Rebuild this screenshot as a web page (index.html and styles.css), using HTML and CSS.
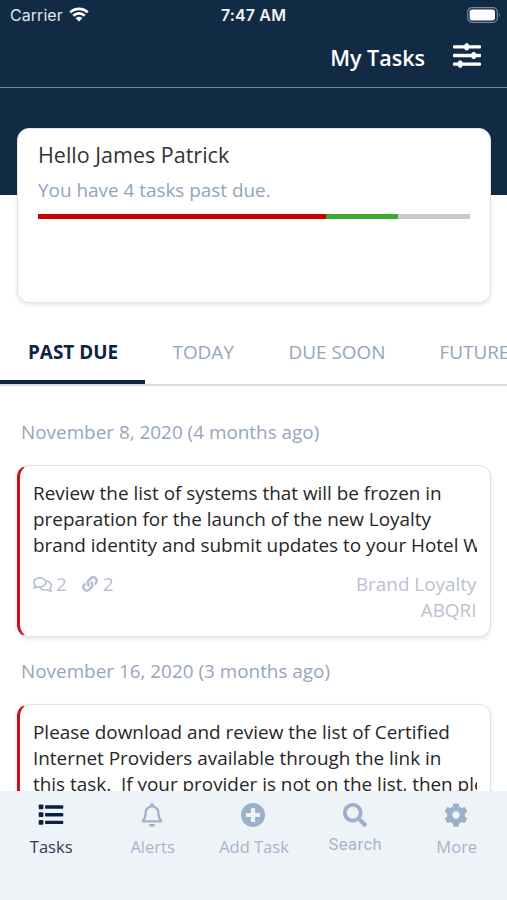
FILE: index.html
```html
<!DOCTYPE html>
<html lang="en">
<head>
<meta charset="utf-8">
<title>My Tasks</title>
<link rel="stylesheet" href="styles.css">
</head>
<body>
<div class="app">
  <header class="hero">
    <div class="status">
      <div class="carrier"><span>Carrier</span>
        <svg class="wifi" viewBox="0 0 20 15"><path d="M10 14.600 6.600 11.200a4.800 4.800 0 0 1 6.800 0z" fill="#fff"/><path d="M4.300 8.700a8.200 8.200 0 0 1 11.400 0M1.200 5.400a12.600 12.600 0 0 1 17.600 0" fill="none" stroke="#fff" stroke-width="2.700"/></svg>
      </div>
      <div class="time">7:47 AM</div>
      <svg class="battery" viewBox="0 0 34 16"><rect x=".7" y=".7" width="29.600" height="14.600" rx="4.400" fill="none" stroke="#7a8796" stroke-width="1.200"/><rect x="2.600" y="2.600" width="25.400" height="10.800" rx="2.600" fill="#fff"/><path d="M31.800 5.500q1.800 2.500 0 5z" fill="#7a8796"/></svg>
    </div>
    <div class="titlebar">
      <h1>My Tasks</h1>
      <svg class="sliders" viewBox="0 0 28 25" fill="#fff"><rect y="2.200" width="28" height="3.400" rx="1"/><rect y="10.800" width="28" height="3.400" rx="1"/><rect y="19.400" width="28" height="3.400" rx="1"/><rect x="11.500" y=".3" width="4.400" height="7.200" rx="1.800"/><rect x="18.500" y="8.900" width="4.400" height="7.200" rx="1.800"/><rect x="5" y="17.500" width="4.400" height="7.200" rx="1.800"/></svg>
    </div>
  </header>

  <section class="summary">
    <h2>Hello James Patrick</h2>
    <p>You have 4 tasks past due.</p>
    <div class="progress"><i class="late"></i><i class="done"></i><i class="rest"></i></div>
  </section>

  <nav class="tabs">
    <a class="tab active">PAST DUE</a>
    <a class="tab today">TODAY</a>
    <a class="tab soon">DUE SOON</a>
    <a class="tab future">FUTURE</a>
  </nav>

  <main class="list">
    <h3>November 8, 2020 (4 months ago)</h3>
    <article class="task">
      <div class="text"><div class="l1">Review the list of systems that will be frozen in</div><div class="l2">preparation for the launch of the new Loyalty</div><div class="l3">brand identity and submit updates to your Hotel Website</div></div>
      <div class="meta">
        <div class="counts">
          <svg class="comments" viewBox="0 0 576 512"><path d="M532 386.200c27.500-27.100 44-61.100 44-98.200 0-80-76.500-146.100-176.200-157.900C368.300 72.500 294.300 32 208 32 93.100 32 0 103.600 0 192c0 37 16.500 71 44 98.200-15.300 30.700-37.300 54.500-37.700 54.900-6.300 6.700-8.100 16.500-4.400 25 3.600 8.500 12 14 21.200 14 53.500 0 96.700-20.200 125.200-38.800 9.200 2.100 18.700 3.700 28.400 4.900C208.100 407.600 281.800 448 368 448c20.800 0 40.800-2.400 59.800-6.800C456.300 459.700 499.400 480 553 480c9.200 0 17.500-5.500 21.200-14 3.600-8.500 1.900-18.300-4.400-25-.4-.3-22.500-24.100-37.800-54.800zm-392.800-92.300L122.100 305c-14.100 9.100-28.500 16.300-43.100 21.400 2.700-4.700 5.400-9.700 8-14.800l15.500-31.100L77.700 256C64.200 242.600 48 220.700 48 192c0-60.700 73.300-112 160-112s160 51.300 160 112-73.300 112-160 112c-16.500 0-33-1.900-49-5.600l-19.800-4.500zM498.300 352l-24.700 24.400 15.500 31.100c2.600 5.100 5.300 10.100 8 14.800-14.600-5.100-29-12.300-43.100-21.400l-17.100-11.100-19.900 4.600c-16 3.700-32.500 5.600-49 5.600-54 0-102.200-20.100-131.300-49.700C338 339.500 416 272.900 416 192c0-3.400-.4-6.700-.7-10C479.700 196.500 528 238.800 528 288c0 28.700-16.200 50.600-29.700 64z"/></svg><span>2</span>
          <svg class="link" viewBox="0 0 512 512"><path d="M326.612 185.391c59.747 59.809 58.927 155.698.36 214.590-.11.12-.24.25-.36.37l-67.200 67.200c-59.270 59.270-155.699 59.262-214.960 0-59.270-59.260-59.270-155.700 0-214.960l37.106-37.106c9.840-9.840 26.786-3.300 27.294 10.606.648 17.722 3.826 35.527 9.690 52.721 1.986 5.822.567 12.262-3.783 16.612l-13.087 13.087c-28.026 28.026-28.905 73.660-1.155 101.960 28.024 28.579 74.086 28.749 102.325.51l67.200-67.190c28.191-28.191 28.073-73.757 0-101.830-3.701-3.694-7.429-6.564-10.341-8.569a16.037 16.037 0 0 1-6.947-12.606c-.396-10.567 3.348-21.456 11.698-29.806l21.054-21.055c5.521-5.521 14.182-6.199 20.584-1.731a152.482 152.482 0 0 1 20.522 17.197zM467.547 44.449c-59.261-59.262-155.690-59.270-214.960 0l-67.200 67.200c-.12.12-.25.25-.36.37-58.566 58.892-59.387 154.781.36 214.590a152.454 152.454 0 0 0 20.521 17.196c6.402 4.468 15.064 3.789 20.584-1.731l21.054-21.055c8.350-8.350 12.094-19.239 11.698-29.806a16.037 16.037 0 0 0-6.947-12.606c-2.912-2.005-6.640-4.875-10.341-8.569-28.073-28.073-28.191-73.639 0-101.830l67.200-67.190c28.239-28.239 74.300-28.069 102.325.51 27.750 28.300 26.872 73.934-1.155 101.960l-13.087 13.087c-4.350 4.350-5.769 10.790-3.783 16.612 5.864 17.194 9.042 34.999 9.690 52.721.509 13.906 17.454 20.446 27.294 10.606l37.106-37.106c59.271-59.259 59.271-155.699.001-214.959z"/></svg><span>2</span>
        </div>
        <div class="tags">Brand Loyalty<br>ABQRI</div>
      </div>
    </article>
    <h3>November 16, 2020 (3 months ago)</h3>
    <article class="task">
      <div class="text"><div class="l1">Please download and review the list of Certified</div><div class="l2">Internet Providers available through the link in</div><div class="l3">this task.&nbsp; If your provider is not on the list, then please</div></div>
    </article>
  </main>

  <footer class="bottom">
    <a class="item on"><svg viewBox="0 0 26 26"><g><rect x=".7" y="2.600" width="4.700" height="4.700" rx="1"/><rect x=".7" y="10.300" width="4.700" height="4.700" rx="1"/><rect x=".7" y="18" width="4.700" height="4.700" rx="1"/><rect x="7" y="3.300" width="18.300" height="3.400" rx="1"/><rect x="7" y="11" width="18.300" height="3.400" rx="1"/><rect x="7" y="18.700" width="18.300" height="3.400" rx="1"/></g></svg><span>Tasks</span></a>
    <a class="item"><svg class="bell" viewBox="0 0 448 512"><path d="M439.390 362.290c-19.320-20.760-55.470-51.990-55.470-154.290 0-77.700-54.480-139.900-127.940-155.160V32c0-17.670-14.320-32-31.980-32s-31.980 14.330-31.980 32v20.840C118.560 68.100 64.080 130.300 64.080 208c0 102.300-36.150 133.530-55.470 154.290-6 6.450-8.660 14.160-8.610 21.710.11 16.400 12.980 32 32.100 32h383.800c19.120 0 32-15.600 32.100-32 .05-7.550-2.610-15.270-8.610-21.710zM67.530 368c21.220-27.970 44.420-74.330 44.530-159.420 0-.2-.06-.38-.06-.58 0-61.860 50.140-112 112-112s112 50.140 112 112c0 .2-.06.38-.06.58.11 85.100 23.310 131.460 44.530 159.420H67.530zM224 512c35.320 0 63.970-28.650 63.970-64H160.030c0 35.350 28.650 64 63.970 64z"/></svg><span>Alerts</span></a>
    <a class="item"><svg class="plus" viewBox="0 0 24 24"><path fill-rule="evenodd" d="M12 0a12 12 0 1 0 0 24 12 12 0 0 0 0-24zM10.600 5h2.800q.7 0 .7.700v4.200h4.200q.7 0 .7.700v2.800q0 .7-.7.700h-4.200v4.200q0 .7-.7.700h-2.800q-.7 0-.7-.7v-4.200H5.700q-.7 0-.7-.7v-2.800q0-.7.700-.7h4.200V5.700q0-.7.700-.7z"/></svg><span>Add Task</span></a>
    <a class="item search"><svg class="glass" viewBox="0 0 512 512"><path d="M505 442.700L405.300 343c-4.500-4.500-10.600-7-17-7H372c27.600-35.300 44-79.700 44-128C416 93.100 322.900 0 208 0S0 93.100 0 208s93.100 208 208 208c48.300 0 92.700-16.400 128-44v16.300c0 6.400 2.500 12.500 7 17l99.700 99.700c9.400 9.400 24.600 9.400 33.900 0l28.300-28.300c9.400-9.400 9.400-24.600.1-34zM208 336c-70.700 0-128-57.200-128-128 0-70.700 57.200-128 128-128 70.700 0 128 57.200 128 128 0 70.700-57.200 128-128 128z"/></svg><span>Search</span></a>
    <a class="item"><svg class="cog" viewBox="0 0 512 512"><path d="M487.400 315.700l-42.600-24.600c4.300-23.200 4.300-47 0-70.200l42.600-24.600c4.900-2.800 7.100-8.600 5.500-14-11.100-35.600-30-67.800-54.700-94.600-3.800-4.100-10-5.100-14.800-2.300L380.800 110c-17.900-15.400-38.500-27.300-60.800-35.100V25.800c0-5.600-3.900-10.500-9.400-11.700-36.700-8.200-74.300-7.800-109.200 0-5.500 1.200-9.400 6.100-9.400 11.700V75c-22.200 7.900-42.800 19.800-60.800 35.100L88.700 85.500c-4.900-2.800-11-1.900-14.800 2.300-24.700 26.700-43.600 58.900-54.700 94.600-1.700 5.400.6 11.200 5.500 14L67.300 221c-4.300 23.200-4.300 47 0 70.200l-42.600 24.600c-4.900 2.800-7.100 8.600-5.500 14 11.100 35.600 30 67.800 54.700 94.600 3.800 4.100 10 5.100 14.800 2.300l42.600-24.600c17.900 15.400 38.500 27.300 60.800 35.100v49.200c0 5.600 3.900 10.500 9.400 11.700 36.700 8.200 74.300 7.800 109.200 0 5.500-1.200 9.400-6.100 9.400-11.700v-49.200c22.200-7.900 42.800-19.800 60.800-35.100l42.600 24.600c4.900 2.800 11 1.900 14.800-2.300 24.700-26.700 43.600-58.900 54.700-94.600 1.500-5.500-.7-11.300-5.600-14.100zM256 336c-44.100 0-80-35.900-80-80s35.900-80 80-80 80 35.900 80 80-35.900 80-80 80z"/></svg><span>More</span></a>
  </footer>
</div>
</body>
</html>
```
FILE: styles.css
```css
* { box-sizing: border-box; }
body { margin: 0; background: #fff; font-family: "Open Sans", sans-serif; }
h1, h2, h3, p { margin: 0; font-weight: 400; }
svg { display: block; flex: none; }
.app { height: 900px; display: flex; flex-direction: column; overflow: hidden; }

.hero { height: 195px; flex: none; background: #112b45; color: #fff; }
.status { height: 29px; display: grid; grid-template-columns: 1fr auto 1fr; align-items: center; padding: 0 7px 0 10px; font-family: Inter, sans-serif; }
.carrier { display: flex; align-items: center; gap: 6px; font-size: 16px; letter-spacing: .05px; color: #dfe5eb; }
.wifi { width: 20px; height: 15px; }
.time { font-size: 16px; font-weight: 600; letter-spacing: .15px; color: #f1f4f7; margin: 1px 2px 0 -1px; }
.battery { width: 34px; height: 16px; justify-self: end; margin-right: -1px; }
.titlebar { height: 59px; display: flex; align-items: center; justify-content: flex-end; gap: 28px; padding: 0 26px 1px 0; border-bottom: 1px solid #77849a; }
.titlebar h1 { font-size: 21.5px; font-weight: 600; line-height: 30px; }
.sliders { width: 28px; height: 25px; margin-bottom: 4px; }

.summary { flex: none; height: 175px; margin: -67px 16px 0 17px; padding: 12px 20px; background: #fff; border: 1px solid #e4e4e6; border-radius: 12px; box-shadow: 0 2px 4px rgba(0,0,0,.1); }
.summary h2 { font-size: 21.5px; line-height: 28px; color: #333; }
.summary p { margin-top: 8px; font-size: 18.900px; line-height: 26px; color: #8fa5bf; }
.progress { display: flex; height: 5px; margin-top: 11px; }
.late { flex: 288; background: #c90000; }
.done { flex: 72; background: #3ca832; }
.rest { flex: 72; background: #c8c8c8; }

.tabs { flex: none; height: 83px; display: flex; overflow: hidden; border-bottom: 2px solid #dedede; white-space: nowrap; font-size: 18.900px; line-height: 26px; color: #94a6bc; padding-top: 36px; }
.tab { flex: none; }
.tab.active { width: 145px; height: 46px; padding-left: 28px; border-bottom: 5px solid #0c2344; color: #0c2344; font-weight: 700; }
.today { padding-left: 27.5px; width: 143.5px; }
.soon { width: 151px; }

.list { flex: 1; min-height: 0; overflow: hidden; padding: 33px 16px 0 17px; }
.list h3 { padding-left: 4px; font-size: 18.900px; line-height: 26px; color: #94a6bc; }
.task { height: 172px; margin: 20px 0 21px; padding: 14px 13px 0 13px; background: #fff; border: 1px solid #e2e2e4; border-left: 3px solid #d01018; border-radius: 12px; box-shadow: 0 2px 4px rgba(0,0,0,.1); }
.text { font-size: 18.900px; line-height: 26px; color: #262626; white-space: nowrap; overflow: hidden; }
.meta { display: flex; justify-content: space-between; margin-top: 13px; font-size: 18.900px; line-height: 26px; color: #b9c1d0; }
.counts { display: flex; height: 26px; align-items: center; }
.counts svg { fill: #b9bfd2; }
.comments { width: 19px; height: 17px; margin-right: 4px; }
.link { width: 16px; height: 16px; margin: 0 5px 0 15px; }
.tags { text-align: right; padding-right: .5px; }

.bottom { flex: none; height: 109px; display: flex; justify-content: space-between; padding-top: 11px; background: #eef3f7; color: #a6b5cb; }
.item { width: 101.4px; display: flex; flex-direction: column; align-items: center; font-size: 16.500px; line-height: 24px; }
.item span { padding-left: 1px; }
.item svg { width: 26px; height: 26px; fill: #9db0ca; margin-bottom: 7px; }
.item.on { color: #2b3b55; }
.item.on svg { fill: #0c2140; }
.item .bell, .item .plus, .item .glass, .item .cog { height: 24px; width: 24px; margin: 1px 0 8px; }
.item.search span { font-family: Roboto, sans-serif; letter-spacing: .5px; margin-top: -2px; }
```
